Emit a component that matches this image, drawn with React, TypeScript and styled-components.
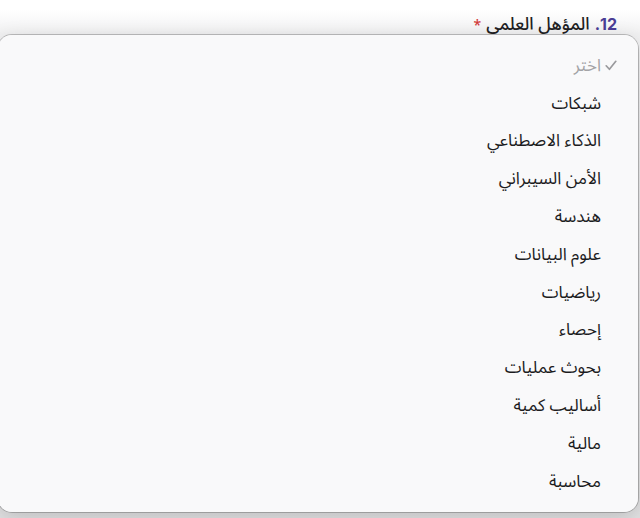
import React from "react";
import styled, { createGlobalStyle } from "styled-components";

const Global = createGlobalStyle`
  html, body { margin: 0; padding: 0; background: #ffffff; }
  body { font-family: "Noto Sans Arabic", "DejaVu Sans", sans-serif; }
  #root { width: 640px; height: 518px; overflow: hidden; }
`;

const Page = styled.div`
  position: relative;
  width: 640px;
  height: 518px;
  background: linear-gradient(#ffffff 0px, #ffffff 10px, #f1f1f2 34px, #e2e2e3 518px);
  overflow: hidden;
`;

const Label = styled.div`
  direction: rtl;
  display: flex;
  gap: 5px;
  align-items: baseline;
  padding: 6px 23px 0 0;
  font-size: 17.5px;
  font-weight: 500;
  color: #1f1f24;
`;

const Num = styled.span`
  color: #4a3d96;
  font-weight: 700;
  font-size: 16px;
  font-family: "Inter", "DejaVu Sans", sans-serif;
`;

const Req = styled.span`
  color: #d23a3a;
  font-size: 14px;
`;

const Menu = styled.ul`
  position: absolute;
  top: 35px;
  left: -2px;
  right: 2px;
  height: 477px;
  box-sizing: border-box;
  margin: 0;
  padding: 12px 0 10px;
  list-style: none;
  direction: rtl;
  background: rgba(249, 249, 250, 0.98);
  border-radius: 14px;
  box-shadow: 0 0 0 1px rgba(0, 0, 0, 0.22), 0 6px 22px rgba(0, 0, 0, 0.16);
`;

const Item = styled.li<{ $placeholder?: boolean }>`
  display: flex;
  align-items: center;
  height: 37.8px;
  padding-right: 17px;
  font-size: 17px;
  color: ${(p) => (p.$placeholder ? "#a3a3a6" : "#1c1c1e")};
`;

const Check = styled.span`
  width: 20px;
  display: inline-flex;
  justify-content: center;
  color: #9a9a9d;
`;

const items = [
  "شبكات",
  "الذكاء الاصطناعي",
  "الأمن السيبراني",
  "هندسة",
  "علوم البيانات",
  "رياضيات",
  "إحصاء",
  "بحوث عمليات",
  "أساليب كمية",
  "مالية",
  "محاسبة",
];

export default function App() {
  return (
    <>
      <Global />
      <Page>
        <Label>
          <Num>12.</Num>
          <span>المؤهل العلمي</span>
          <Req>*</Req>
        </Label>
        <Menu>
          <Item $placeholder>
            <Check>
              <svg width="12" height="11" viewBox="0 0 12 11">
                <path d="M1.2 5.8 L4.4 9.3 L10.8 1.3" fill="none" stroke="#9a9a9d" strokeWidth="1.7" strokeLinecap="round" strokeLinejoin="round" />
              </svg>
            </Check>
            اختر
          </Item>
          {items.map((t) => (
            <Item key={t}>
              <Check />
              {t}
            </Item>
          ))}
        </Menu>
      </Page>
    </>
  );
}
